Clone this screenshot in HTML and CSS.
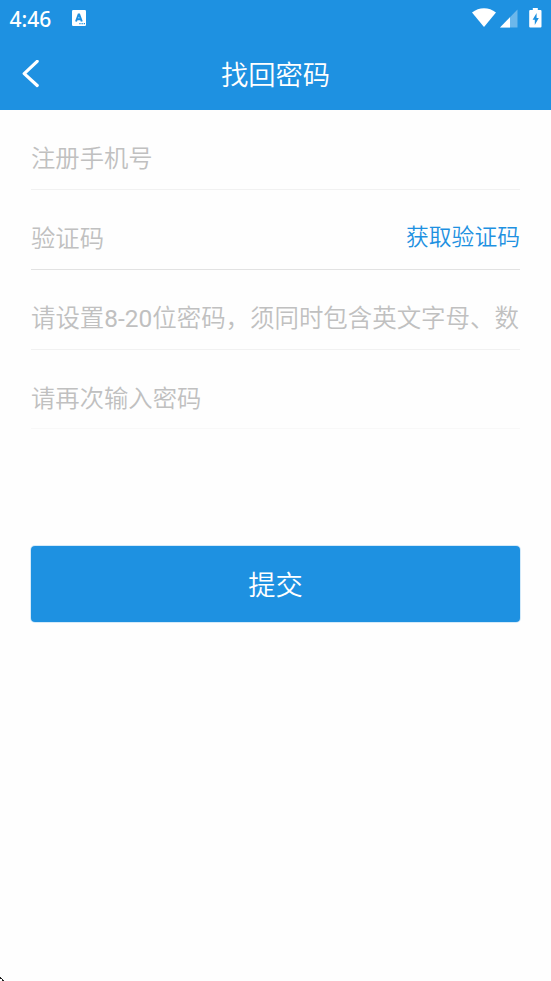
FILE: index.html
```html
<!DOCTYPE html>
<html lang="zh-CN">
<head>
<meta charset="utf-8">
<title>找回密码</title>
<link rel="stylesheet" href="styles.css">
</head>
<body>
<header class="top">
  <div class="status">
    <span class="time">4:46</span>
    <svg class="app-icon" width="14" height="16" viewBox="0 0 14 16">
      <rect width="14" height="16" rx="1.2" fill="#fff"/>
      <path d="M4 11.500 6.600 4.600H7.200L9.800 11.500M5 9.200h3.900" fill="none" stroke="#1e91e1" stroke-width="2"/>
      <path d="M7.300 13.700h1.300M9.500 13.700h1.300M11.700 13.700H13" stroke="#1e91e1" stroke-width="1.300"/>
    </svg>
    <svg class="signals" width="71" height="22" viewBox="0 0 71 22">
      <path d="M0 4.400C7-1.300 17-1.300 24 4.400L12 19Z" fill="#fff"/>
      <path d="M45.500 1.500V19.500H28Z" fill="#fff" opacity=".35"/>
      <path d="M38 9.200V19.500H28Z" fill="#fff"/>
      <path d="M60.800 0h5v2h2.700q1 0 1 1v15.500q0 1-1 1h-10.300q-1 0-1-1V3q0-1 1-1h2.600Z" fill="#fff"/>
      <path d="M64.600 5 60.600 11.700h2.200v5.300l4-7h-2.200Z" fill="#1e91e1"/>
    </svg>
  </div>
  <div class="nav">
    <svg class="back" width="18" height="28" viewBox="0 0 18 28">
      <path d="M15.200 1.300 2.200 13.600 15.200 25.500" fill="none" stroke="#fff" stroke-width="3.200" stroke-linecap="round" stroke-linejoin="round"/>
    </svg>
    <h1>找回密码</h1>
  </div>
</header>
<main class="form">
  <div class="field"><span class="hint">注册手机号</span></div>
  <div class="field strong"><span class="hint">验证码</span><a class="get-code">获取验证码</a></div>
  <div class="field"><span class="hint long">请设置<span class="latin">8-20</span>位密码，须同时包含英文字母、数</span></div>
  <div class="field faint"><span class="hint">请再次输入密码</span></div>
  <button class="submit" type="button">提交</button>
</main>
<svg class="pointer" width="4" height="4" viewBox="0 0 4 4"><path d="M0 0h1v1h1v1H0ZM2 2h1v1h1v1H2Z" fill="#222"/></svg>
</body>
</html>
```
FILE: styles.css
```css
* {
  box-sizing: border-box;
}

body {
  margin: 0;
  height: 981px;
  overflow: hidden;
  position: relative;
  background: #fefefe;
  font-family: Roboto, "Noto Sans CJK SC", sans-serif;
  font-weight: 350;
}

.top {
  height: 110px;
  background: #1e91e1;
  color: #fff;
}

.status {
  display: flex;
  align-items: flex-start;
  height: 37px;
  padding: 0 8px 0 9.5px;
}

.time {
  width: 62.5px;
  font: 500 21px/38px "Noto Sans", sans-serif;
}

.app-icon {
  margin-top: 10px;
}

.signals {
  margin: 8px 0 0 auto;
}

.nav {
  display: grid;
  grid-template-columns: 60px 1fr 60px;
  align-items: center;
  height: 73px;
}

.back {
  margin-left: 22px;
}

h1 {
  margin: 0;
  padding-top: 4px;
  font-size: 27.3px;
  font-weight: inherit;
  line-height: 40px;
  text-align: center;
}

.form {
  padding: 0 31px;
}

.field {
  display: flex;
  align-items: flex-end;
  justify-content: space-between;
  height: 80px;
  padding-bottom: 12px;
  border-bottom: 1px solid #f1f1f1;
}

.strong {
  border-color: #e2e2e2;
}

.faint {
  height: 79px;
  padding-bottom: 11px;
  border-color: #f8f8f8;
}

.hint {
  color: #c0c0c0;
  font-size: 24.35px;
  line-height: 36px;
  white-space: nowrap;
}

.long {
  font-size: 24.45px;
}

.latin {
  font-weight: 400;
}

.get-code {
  color: #1e91e1;
  font-size: 22.8px;
  line-height: 38px;
}

.submit {
  display: block;
  width: 489px;
  height: 76px;
  margin-top: 117px;
  padding: 0 0 2px;
  border: 0;
  border-radius: 4px;
  background: #1e91e1;
  box-shadow: 0 0 0 1px #d4eaf9;
  color: #fff;
  font: inherit;
  font-size: 27.3px;
}

.pointer {
  position: absolute;
  left: 0;
  bottom: 0;
}
```
